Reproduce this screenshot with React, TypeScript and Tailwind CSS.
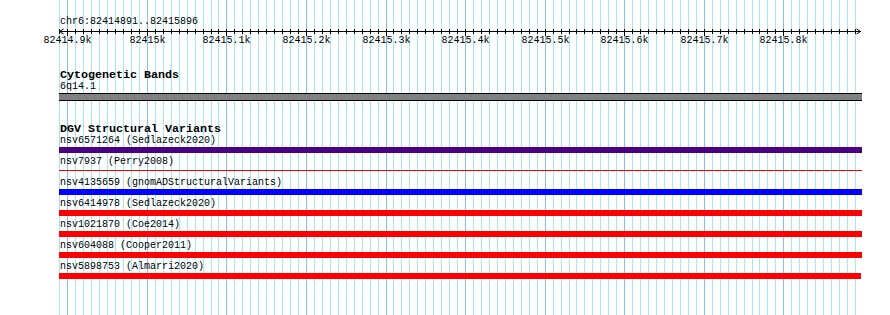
const MONO = "font-['Liberation_Mono','DejaVu_Sans_Mono',monospace]";

// grid lines every 10bp, majors every 100bp
const gridXs = Array.from({ length: 101 }, (_, i) => {
  const k = i - 1;
  return { x: Math.round(67.3 + k * 7.956), major: k % 10 === 0 };
});

const majorLabels = [
  "82414.9k",
  "82415k",
  "82415.1k",
  "82415.2k",
  "82415.3k",
  "82415.4k",
  "82415.5k",
  "82415.6k",
  "82415.7k",
  "82415.8k",
];

type Variant = { id: string; source: string; color: string; thin?: boolean; short?: boolean };

const variants: Variant[] = [
  { id: "nsv6571264", source: "Sedlazeck2020", color: "bg-[#4b0082]" },
  { id: "nsv7937", source: "Perry2008", color: "bg-[#ff0000]", thin: true },
  { id: "nsv4135659", source: "gnomADStructuralVariants", color: "bg-[#0000ff]" },
  { id: "nsv6414978", source: "Sedlazeck2020", color: "bg-[#ff0000]" },
  { id: "nsv1021870", source: "Coe2014", color: "bg-[#ff0000]" },
  { id: "nsv604088", source: "Cooper2011", color: "bg-[#ff0000]" },
  { id: "nsv5898753", source: "Almarri2020", color: "bg-[#ff0000]", short: true },
];

function Grid() {
  return (
    <svg className="absolute inset-0" width={890} height={315} shapeRendering="crispEdges">
      {gridXs.map((g, i) => (
        <line
          key={i}
          x1={g.x + 0.5}
          x2={g.x + 0.5}
          y1={0}
          y2={315}
          stroke={g.major ? "#84c2e8" : "#a6e8f0"}
          strokeWidth={1}
        />
      ))}
    </svg>
  );
}

function Ruler() {
  const off = 59;
  const top = 27;
  return (
    <svg width={803} height={18} className="block overflow-visible" shapeRendering="crispEdges">
      <line x1={0} x2={802} y1={31.5 - top} y2={31.5 - top} stroke="#000" />
      {gridXs.map((g, i) => (
        <line
          key={i}
          x1={g.x - off + 0.5}
          x2={g.x - off + 0.5}
          y1={29 - top}
          y2={(g.major ? 36 : 34) - top}
          stroke="#000"
        />
      ))}
      <polyline points={`4.5,${29 - top} 0.5,${31.5 - top} 4.5,${34 - top}`} fill="none" stroke="#000" shapeRendering="auto" />
      <polyline points={`797.5,${29 - top} 801.5,${31.5 - top} 797.5,${34 - top}`} fill="none" stroke="#000" shapeRendering="auto" />
      {majorLabels.map((t, i) => (
        <text
          key={t}
          x={gridXs[i * 10 + 1].x - off + 0.5}
          y={43 - top}
          textAnchor="middle"
          fontFamily="'Liberation Mono', 'DejaVu Sans Mono', monospace"
          fontSize={10}
          fill="#000"
        >
          {t}
        </text>
      ))}
    </svg>
  );
}

export default function App() {
  return (
    <div className={`relative w-[890px] h-[315px] overflow-hidden bg-white text-black ${MONO}`}>
      <Grid />
      <div className="relative pl-[59px] w-[862px]">
        <div className="pt-[17px] pl-px h-[27px] text-[10px] leading-[10px]">chr6:82414891..82415896</div>
        <Ruler />

        <div className="mt-[24px] pl-px h-[12px] text-[11.67px] leading-[12px] font-bold">Cytogenetic Bands</div>
        <div className="mt-px pl-px h-[10px] text-[10px] leading-[10px]">6q14.1</div>
        <div className="mt-px h-[8px] border-y border-black bg-[#808080]" />

        <div className="mt-[22px] pl-px h-[12px] text-[11.67px] leading-[12px] font-bold">DGV Structural Variants</div>
        <div className="flex flex-col">
          {variants.map((v, i) => (
            <div key={v.id} className={i === 0 ? "pt-px" : "pt-[4px]"}>
              <div className="pl-px h-[10px] text-[10px] leading-[10px] whitespace-pre">
                {v.id} ({v.source})
              </div>
              <div className="mt-px h-[6px] flex flex-col">
                {v.thin ? (
                  <div className={`mt-[2px] h-px ${v.color}`} />
                ) : (
                  <div className={`h-[6px] ${v.short ? "w-[802px]" : "w-[803px]"} ${v.color}`} />
                )}
              </div>
            </div>
          ))}
        </div>
      </div>
    </div>
  );
}
